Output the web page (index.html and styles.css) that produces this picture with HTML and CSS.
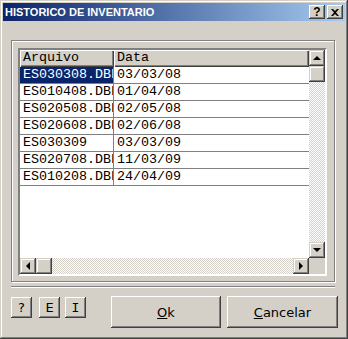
FILE: index.html
```html
<!DOCTYPE html>
<html lang="pt">
<head>
  <meta charset="UTF-8">
  <title>Historico de Inventario</title>
  <link rel="stylesheet" href="styles.css">
</head>
<body>
  <div class="window">
    <div class="titlebar">
      <span class="title">HISTORICO DE INVENTARIO</span>
      <div class="caption-buttons">
        <div class="cap-btn cap-help">?</div>
        <div class="cap-btn cap-close">
          <svg width="8" height="7" viewBox="0 0 8 7"><path d="M0 0h2l2 2 2-2h2L5 3.5 8 7H6L4 5 2 7H0l3-3.5z" fill="#000"/></svg>
        </div>
      </div>
    </div>

    <div class="groupbox">
      <div class="listview">
        <div class="grid">
          <div class="grid-header">
            <div class="hcell col-file">Arquivo</div>
            <div class="hcell col-date">Data</div>
          </div>
          <div class="grid-row">
            <div class="cell col-file selected">ES030308.DBF</div>
            <div class="cell col-date">03/03/08</div>
          </div>
          <div class="grid-row">
            <div class="cell col-file">ES010408.DBF</div>
            <div class="cell col-date">01/04/08</div>
          </div>
          <div class="grid-row">
            <div class="cell col-file">ES020508.DBF</div>
            <div class="cell col-date">02/05/08</div>
          </div>
          <div class="grid-row">
            <div class="cell col-file">ES020608.DBF</div>
            <div class="cell col-date">02/06/08</div>
          </div>
          <div class="grid-row">
            <div class="cell col-file">ES030309</div>
            <div class="cell col-date">03/03/09</div>
          </div>
          <div class="grid-row">
            <div class="cell col-file">ES020708.DBF</div>
            <div class="cell col-date">11/03/09</div>
          </div>
          <div class="grid-row">
            <div class="cell col-file">ES010208.DBF</div>
            <div class="cell col-date">24/04/09</div>
          </div>
        </div>

        <div class="vscroll">
          <div class="sb-btn"><span class="arrow arrow-up"></span></div>
          <div class="sb-btn"></div>
          <div class="sb-track"></div>
          <div class="sb-btn"><span class="arrow arrow-down"></span></div>
        </div>

        <div class="hscroll">
          <div class="sb-btn"><span class="arrow arrow-left"></span></div>
          <div class="sb-btn"></div>
          <div class="sb-track"></div>
          <div class="sb-btn"><span class="arrow arrow-right"></span></div>
        </div>

        <div class="corner"></div>
      </div>
    </div>

    <div class="separator"></div>

    <div class="button-row">
      <button class="btn btn-small">?</button>
      <button class="btn btn-small btn-e">E</button>
      <button class="btn btn-small btn-i">I</button>
      <button class="btn btn-big btn-ok"><u>O</u>k</button>
      <button class="btn btn-big btn-cancel"><u>C</u>ancelar</button>
    </div>
  </div>
</body>
</html>
```

FILE: styles.css
```css
* {
  box-sizing: border-box;
  margin: 0;
  padding: 0;
}
body {
  background-color: #d4d0c8;
  font-family: "Liberation Sans", Arial, sans-serif;
}
.window {
  width: 348px;
  height: 339px;
  padding: 3px;
  background-color: #d4d0c8;
  box-shadow: inset -1px -1px #404040, inset 1px 1px #d4d0c8,
              inset -2px -2px #808080, inset 2px 2px #fff;
}

/* Title bar */
.titlebar {
  height: 18px;
  display: flex;
  align-items: center;
  justify-content: space-between;
  padding: 0 2px;
  background: linear-gradient(to right, #0a246a, #a6caf0);
}
.title {
  color: #fff;
  font-weight: bold;
  font-size: 11px;
}
.caption-buttons {
  display: flex;
  gap: 2px;
}
.cap-btn {
  width: 16px;
  height: 14px;
  display: flex;
  align-items: center;
  justify-content: center;
  background-color: #d4d0c8;
  box-shadow: inset -1px -1px #404040, inset 1px 1px #fff,
              inset -2px -2px #808080;
}
.cap-help {
  font-weight: bold;
  font-size: 12px;
  line-height: 14px;
}

/* Group box */
.groupbox {
  width: 324px;
  height: 242px;
  margin: 19px 0 0 8px;
  padding: 7px 0 0 6px;
  border: 1px solid #808080;
  box-shadow: inset 1px 1px #fff, 1px 1px #fff;
}
.listview {
  width: 309px;
  height: 228px;
  border: 2px solid;
  border-color: #808080 #fff #fff #808080;
  display: grid;
  grid-template-columns: 289px 16px;
  grid-template-rows: 208px 16px;
  box-shadow: inset 1px 1px #404040;
}
.grid {
  background-color: #fff;
  overflow: hidden;
  font-family: "Liberation Mono", "Courier New", monospace;
  font-size: 13.33px;
  color: #000;
}
.grid-header {
  display: flex;
  height: 17px;
}
.hcell {
  height: 17px;
  line-height: 16px;
  padding-left: 3px;
  background-color: #d4d0c8;
  box-shadow: inset 1px 1px #fff, inset -1px -1px #404040,
              inset -2px -2px #808080;
  white-space: nowrap;
}
.grid-row {
  display: flex;
  height: 17px;
  border-bottom: 1px solid #808080;
}
.cell {
  height: 16px;
  line-height: 16px;
  padding-left: 3px;
  white-space: nowrap;
  overflow: hidden;
}
.col-file {
  width: 94px;
}
.col-date {
  width: 195px;
}
.cell.col-file {
  border-right: 1px solid #808080;
}
.selected {
  background-color: #0a246a;
  color: #fff;
}

/* Scroll bars */
.vscroll,
.hscroll {
  display: flex;
}
.vscroll {
  flex-direction: column;
}
.sb-btn {
  width: 16px;
  height: 16px;
  flex: none;
  display: flex;
  align-items: center;
  justify-content: center;
  background-color: #d4d0c8;
  box-shadow: inset -1px -1px #404040, inset 1px 1px #d4d0c8,
              inset -2px -2px #808080, inset 2px 2px #fff;
}
.sb-track {
  flex: 1;
  background: repeating-conic-gradient(#fff 0 25%, #d4d0c8 0 50%) 0 0 / 2px 2px;
}
.corner {
  background-color: #d4d0c8;
}
.arrow {
  width: 0;
  height: 0;
  border: 4px solid transparent;
}
.arrow-up {
  border-bottom-color: #000;
  border-top-width: 0;
}
.arrow-down {
  border-top-color: #000;
  border-bottom-width: 0;
}
.arrow-left {
  border-right-color: #000;
  border-left-width: 0;
}
.arrow-right {
  border-left-color: #000;
  border-right-width: 0;
}

/* Bottom */
.separator {
  width: 324px;
  margin: 4px 0 0 8px;
  border-top: 1px solid #808080;
  border-bottom: 1px solid #fff;
}
.button-row {
  display: flex;
  align-items: flex-start;
  margin: 8px 0 0 8px;
}
.btn {
  border: none;
  background-color: #d4d0c8;
  color: #000;
  box-shadow: inset -1px -1px #404040, inset 1px 1px #fff,
              inset -2px -2px #808080, inset 2px 2px #d4d0c8;
}
.btn-small {
  width: 21px;
  height: 21px;
  margin-top: 1px;
  font-family: "DejaVu Sans", sans-serif;
  font-size: 13px;
  font-weight: normal;
}
.btn-e {
  margin-left: 7px;
}
.btn-i {
  margin-left: 5px;
  font-family: "DejaVu Sans Mono", monospace;
}
.btn-big {
  height: 32px;
  font-family: "DejaVu Sans", sans-serif;
  font-size: 13px;
}
.btn-ok {
  width: 110px;
  margin-left: 25px;
}
.btn-cancel {
  width: 111px;
  margin-left: 6px;
}
```
